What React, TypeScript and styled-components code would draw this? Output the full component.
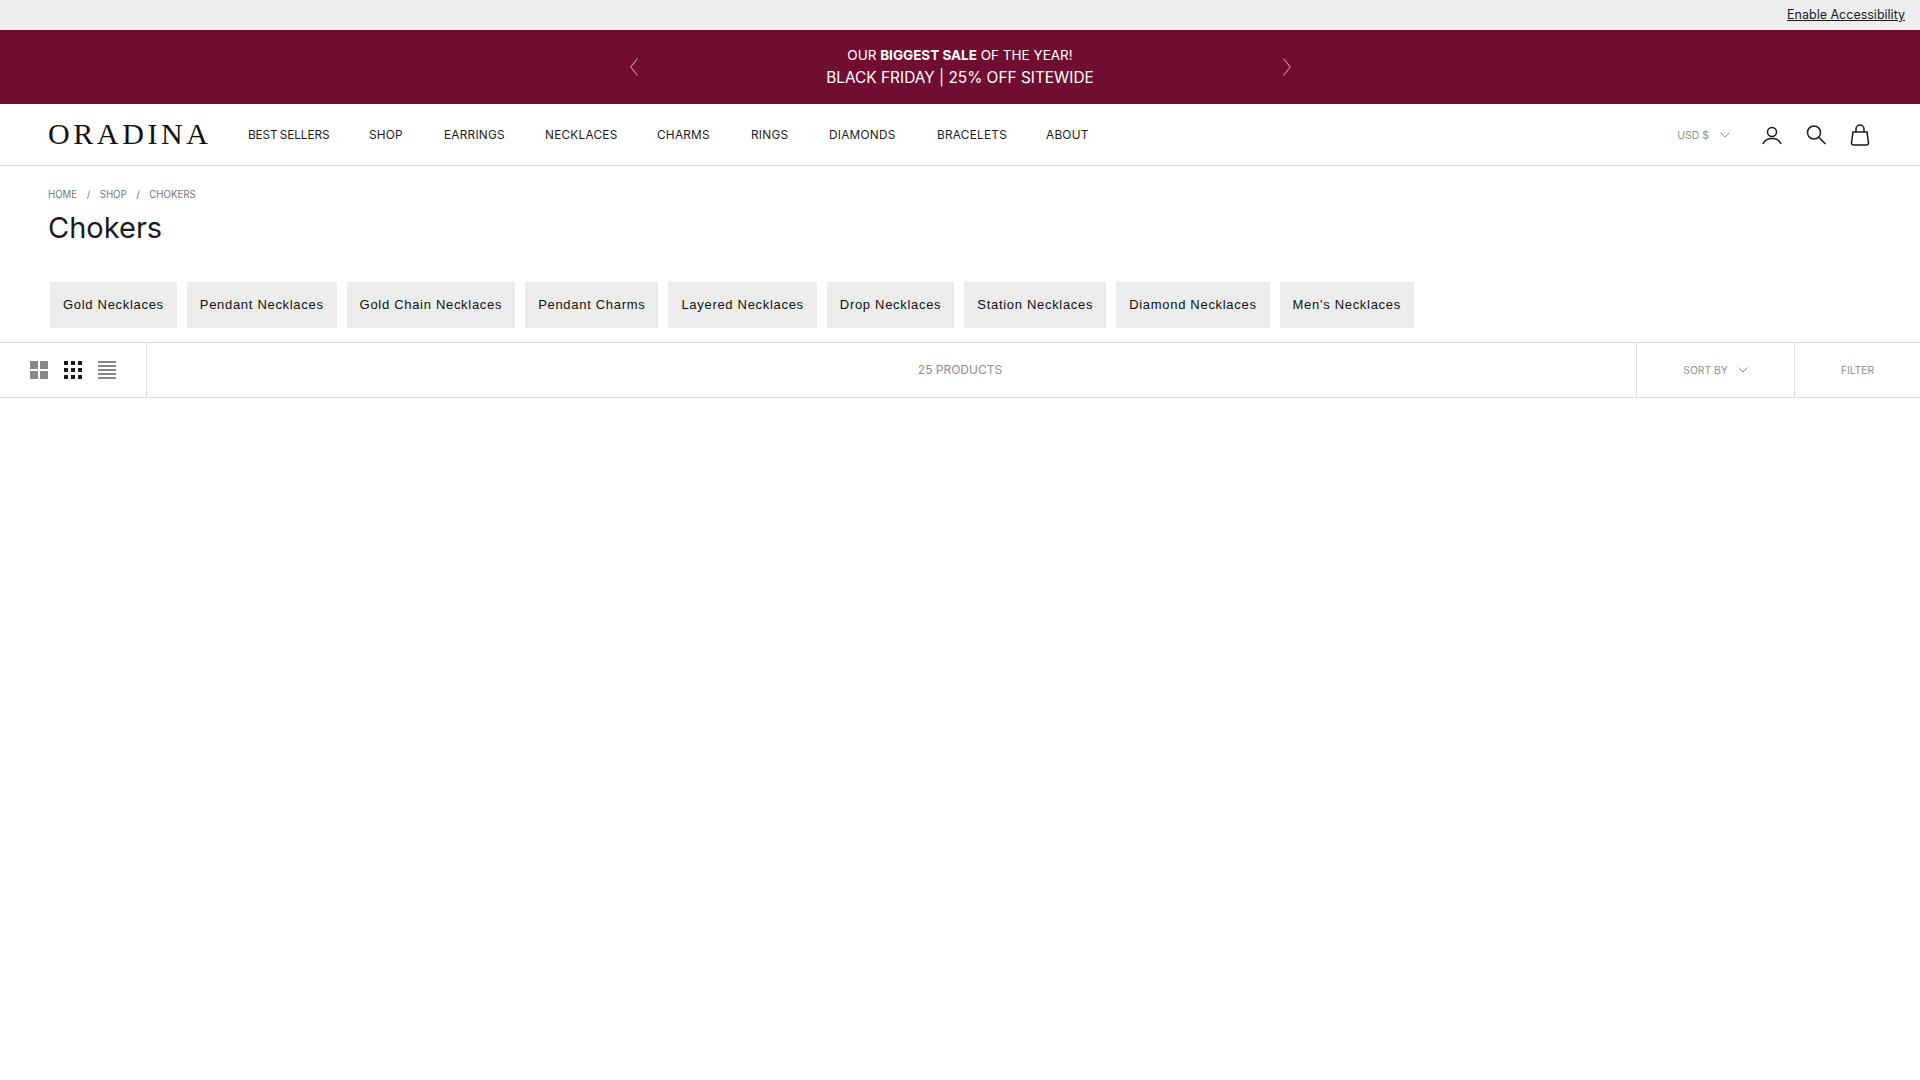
import React from 'react';
import styled, { createGlobalStyle } from 'styled-components';

const GlobalStyle = createGlobalStyle`
  html, body {
    margin: 0;
    padding: 0;
    background: #fff;
    font-family: "Inter", "Liberation Sans", sans-serif;
    color: #1a1a1a;
  }
  * { box-sizing: border-box; }
`;

const TopBar = styled.div`
  height: 30px;
  background: #eeeeee;
  display: flex;
  justify-content: flex-end;
  align-items: center;
  padding-right: 15px;
`;

const AccessLink = styled.a`
  font-size: 12.5px;
  color: #1c1c1c;
  text-decoration: underline;
  padding-bottom: 1px;
`;

const Banner = styled.div`
  height: 74px;
  background: #710d31;
  color: #fff;
  display: flex;
  justify-content: center;
  align-items: center;
`;

const BannerArrow = styled.button`
  width: 20px;
  height: 20px;
  padding: 0;
  border: 0;
  background: none;
  color: #fff;
  opacity: 0.8;
  display: flex;
  align-items: center;
  justify-content: center;
`;

const BannerText = styled.div`
  width: 633px;
  text-align: center;
`;

const BannerLine = styled.p<{ $big?: boolean }>`
  margin: 0;
  font-size: ${(p) => (p.$big ? '15.4px' : '13.5px')};
  line-height: ${(p) => (p.$big ? '24px' : '22px')};
  b { font-weight: 700; }
`;

const Header = styled.header`
  height: 62px;
  border-bottom: 1px solid #dddddd;
  padding: 0 50px 0 48px;
  display: flex;
  align-items: center;
`;

const Logo = styled.div`
  font-family: "Liberation Serif", serif;
  font-size: 30px;
  letter-spacing: 3.6px;
  line-height: 1;
  width: 200px;
  padding-bottom: 2px;
  color: #111;
`;

const Nav = styled.nav`
  display: flex;
  gap: 40px;
  flex: 1;
`;

const NavLink = styled.a<{ $width: number; $tight?: boolean }>`
  width: ${(p) => p.$width}px;
  font-size: 11.8px;
  letter-spacing: ${(p) => (p.$tight ? '-0.1px' : '0.25px')};
  word-spacing: -1px;
  white-space: nowrap;
  color: #1c1c1c;
`;

const HeaderRight = styled.div`
  display: flex;
  align-items: center;
`;

const Currency = styled.div`
  display: flex;
  align-items: center;
  gap: 11px;
  padding-top: 1px;
  font-size: 10.5px;
  color: #8d8d8d;
  margin-right: 32px;
`;

const IconRow = styled.div`
  display: flex;
  align-items: center;
  gap: 24px;
  color: #1a1a1a;
`;

const Crumbs = styled.div`
  padding: 22px 48px 0;
  display: flex;
  gap: 9.5px;
  font-size: 9.7px;
  line-height: 14px;
  color: #777;
`;

const Title = styled.h1`
  margin: 6px 0 0 48px;
  font-size: 29px;
  line-height: 40px;
  font-weight: 400;
  color: #1a1a1a;
`;

const Chips = styled.div`
  display: flex;
  gap: 10px;
  padding: 34px 50px 0;
`;

const Chip = styled.a`
  height: 46px;
  padding: 0 13px 1px;
  display: flex;
  align-items: center;
  background: #ececec;
  font-family: "Liberation Sans", Arial, sans-serif;
  font-size: 13px;
  letter-spacing: 0.695px;
  color: #111;
`;

const Toolbar = styled.div`
  margin-top: 14px;
  height: 56px;
  border-top: 1px solid #dddddd;
  border-bottom: 1px solid #dddddd;
  display: flex;
  align-items: stretch;
`;

const LayoutSwitch = styled.div`
  width: 147px;
  border-right: 1px solid #dddddd;
  padding-left: 30px;
  display: flex;
  align-items: center;
  gap: 16px;
`;

const Count = styled.div`
  flex: 1;
  padding-left: 137px;
  padding-bottom: 1px;
  display: flex;
  align-items: center;
  justify-content: center;
  font-size: 12px;
  color: #8d8d8d;
`;

const ToolButton = styled.div<{ $width: number }>`
  width: ${(p) => p.$width}px;
  border-left: 1px solid #dddddd;
  display: flex;
  align-items: center;
  justify-content: center;
  gap: 10px;
  font-size: 10.3px;
  color: #8d8d8d;
`;

const Chevron = () => (
  <svg width="10" height="6" viewBox="0 0 10 6" fill="none" stroke="currentColor" strokeWidth="1">
    <path d="M0.5 0.5 5 5 9.5 0.5" />
  </svg>
);

const ArrowLeft = () => (
  <svg width="8" height="18" viewBox="0 0 8 18" fill="none" stroke="currentColor" strokeWidth="0.9">
    <path d="M7.5 0.5 0.7 9l6.800 8.500" />
  </svg>
);

const ArrowRight = () => (
  <svg width="8" height="18" viewBox="0 0 8 18" fill="none" stroke="currentColor" strokeWidth="0.9">
    <path d="M0.5 0.5 7.300 9l-6.800 8.500" />
  </svg>
);

const AccountIcon = () => (
  <svg width="20" height="20" viewBox="0 0 20 20" fill="none" stroke="currentColor" strokeWidth="1.5">
    <circle cx="10" cy="7" r="4.500" />
    <path d="M1 19c1.500-3.500 5-5.500 9-5.500s7.500 2 9 5.500" />
  </svg>
);

const SearchIcon = () => (
  <svg width="20" height="20" viewBox="0 0 20 20" fill="none" stroke="currentColor" strokeWidth="1.5">
    <circle cx="8" cy="7.500" r="6.500" />
    <path d="m12.800 12.300 6.700 6.700" />
  </svg>
);

const BagIcon = () => (
  <svg width="20" height="22" viewBox="0 0 20 22" fill="none" stroke="currentColor" strokeWidth="1.5">
    <path d="M3 8h14l1.500 10.500a2 2 0 0 1-2 2.500h-13a2 2 0 0 1-2-2.500z" />
    <path d="M6 8V5a4 4 0 0 1 8 0v3" />
  </svg>
);

const GridTwo = () => (
  <svg width="18" height="18" viewBox="0 0 18 18" fill="#888">
    <rect width="8" height="8" />
    <rect x="10" width="8" height="8" />
    <rect y="10" width="8" height="8" />
    <rect x="10" y="10" width="8" height="8" />
  </svg>
);

const GridThree = () => (
  <svg width="18" height="18" viewBox="0 0 18 18" fill="#1a1a1a">
    {[0, 7, 14].map((y) =>
      [0, 7, 14].map((x) => <rect key={`${x}-${y}`} x={x} y={y} width="4" height="4" />)
    )}
  </svg>
);

const GridList = () => (
  <svg width="18" height="18" viewBox="0 0 18 18" fill="#888">
    {[0, 4, 8, 12, 16].map((y) => (
      <rect key={y} y={y} width="18" height="2" />
    ))}
  </svg>
);

const navItems = [
  { label: 'BEST SELLERS', width: 81, tight: true },
  { label: 'SHOP', width: 35 },
  { label: 'EARRINGS', width: 61 },
  { label: 'NECKLACES', width: 72 },
  { label: 'CHARMS', width: 54 },
  { label: 'RINGS', width: 38 },
  { label: 'DIAMONDS', width: 68 },
  { label: 'BRACELETS', width: 69 },
  { label: 'ABOUT', width: 42 },
];

const chips = [
  'Gold Necklaces',
  'Pendant Necklaces',
  'Gold Chain Necklaces',
  'Pendant Charms',
  'Layered Necklaces',
  'Drop Necklaces',
  'Station Necklaces',
  'Diamond Necklaces',
  "Men's Necklaces",
];

export default function App() {
  return (
    <>
      <GlobalStyle />
      <TopBar>
        <AccessLink>Enable Accessibility</AccessLink>
      </TopBar>
      <Banner>
        <BannerArrow><ArrowLeft /></BannerArrow>
        <BannerText>
          <BannerLine>OUR <b>BIGGEST SALE</b> OF THE YEAR!</BannerLine>
          <BannerLine $big>BLACK FRIDAY | 25% OFF SITEWIDE</BannerLine>
        </BannerText>
        <BannerArrow><ArrowRight /></BannerArrow>
      </Banner>
      <Header>
        <Logo>ORADINA</Logo>
        <Nav>
          {navItems.map((item) => (
            <NavLink key={item.label} $width={item.width} $tight={item.tight}>{item.label}</NavLink>
          ))}
        </Nav>
        <HeaderRight>
          <Currency>USD $ <Chevron /></Currency>
          <IconRow>
            <AccountIcon />
            <SearchIcon />
            <BagIcon />
          </IconRow>
        </HeaderRight>
      </Header>
      <Crumbs>
        <span>HOME</span><span>/</span><span>SHOP</span><span>/</span><span>CHOKERS</span>
      </Crumbs>
      <Title>Chokers</Title>
      <Chips>
        {chips.map((c) => <Chip key={c}>{c}</Chip>)}
      </Chips>
      <Toolbar>
        <LayoutSwitch>
          <GridTwo />
          <GridThree />
          <GridList />
        </LayoutSwitch>
        <Count>25 PRODUCTS</Count>
        <ToolButton $width={158}>SORT BY <Chevron /></ToolButton>
        <ToolButton $width={126}>FILTER</ToolButton>
      </Toolbar>
    </>
  );
}
